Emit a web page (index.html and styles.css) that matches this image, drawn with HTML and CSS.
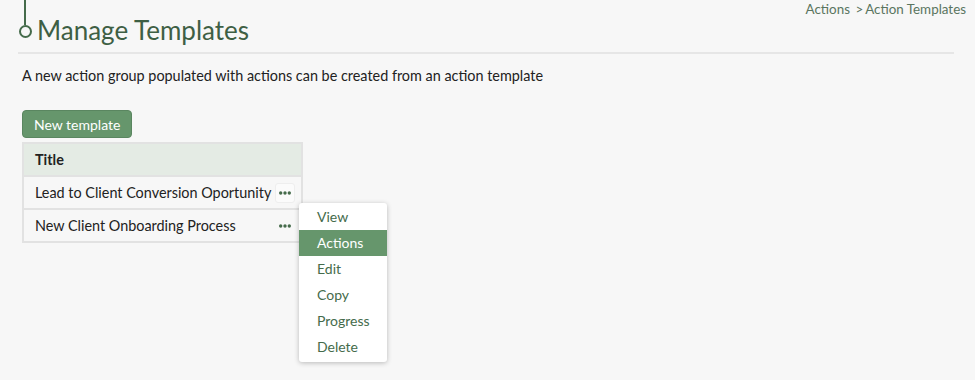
FILE: index.html
```html
<!DOCTYPE html>
<html lang="en">
<head>
    <meta charset="UTF-8">
    <title>Manage Templates</title>
    <link rel="stylesheet" href="styles.css">
</head>
<body>
    <div class="page">
        <div class="page-header">
            <div class="heading">
                <div class="marker">
                    <div class="marker-line"></div>
                    <div class="marker-dot"></div>
                </div>
                <h1 class="page-title">Manage Templates</h1>
            </div>
            <div class="breadcrumb">
                <a href="#">Actions</a>
                <span class="sep">&gt;</span><span>Action Templates</span>
            </div>
        </div>

        <div class="content">
            <p class="intro">A new action group populated with actions can be created from an action template</p>

            <button class="btn-primary">New template</button>

            <table class="template-table">
                <thead>
                    <tr>
                        <th>Title</th>
                    </tr>
                </thead>
                <tbody>
                    <tr>
                        <td>
                            <div class="cell">
                                <span>Lead to Client Conversion Oportunity</span>
                                <button class="more-btn hover">
                                    <svg width="12" height="4" viewBox="0 0 12 4"><circle cx="1.7" cy="2" r="1.7"/><circle cx="6" cy="2" r="1.7"/><circle cx="10.3" cy="2" r="1.7"/></svg>
                                </button>
                            </div>
                        </td>
                    </tr>
                    <tr>
                        <td>
                            <div class="cell">
                                <span>New Client Onboarding Process</span>
                                <button class="more-btn">
                                    <svg width="12" height="4" viewBox="0 0 12 4"><circle cx="1.7" cy="2" r="1.7"/><circle cx="6" cy="2" r="1.7"/><circle cx="10.3" cy="2" r="1.7"/></svg>
                                </button>
                                <ul class="row-menu">
                                    <li><a href="#">View</a></li>
                                    <li><a href="#" class="active">Actions</a></li>
                                    <li><a href="#">Edit</a></li>
                                    <li><a href="#">Copy</a></li>
                                    <li><a href="#">Progress</a></li>
                                    <li><a href="#">Delete</a></li>
                                </ul>
                            </div>
                        </td>
                    </tr>
                </tbody>
            </table>
        </div>
    </div>
</body>
</html>
```

FILE: styles.css
```css
:root {
    --green: #66966c;
    --green-dark: #456b4b;
    --title-color: #3e5f44;
    --bg-color: #f7f7f7;
    --border-color: #e2e2e2;
    --text-color: #222222;
}

* {
    margin: 0;
    padding: 0;
    box-sizing: border-box;
}

html, body {
    min-height: 100%;
    height: 100%;
}

body {
    font-family: Lato, "Noto Sans", sans-serif;
    background: var(--bg-color);
    color: var(--text-color);
    font-size: 14.4px;
    line-height: 1.4;
}

.page {
    min-height: 100vh;
    padding: 0 21px 0 18px;
}

.page-header {
    display: flex;
    justify-content: space-between;
    align-items: flex-start;
    border-bottom: 2px solid #e6e6e6;
    padding-bottom: 6px;
}

.heading {
    display: flex;
    align-items: flex-end;
}

.marker {
    display: flex;
    flex-direction: column;
    align-items: center;
    width: 14px;
    margin-bottom: 8px;
}

.marker-line {
    width: 2px;
    height: 25px;
    background: var(--green-dark);
}

.marker-dot {
    width: 13px;
    height: 13px;
    border: 2px solid var(--green-dark);
    border-radius: 50%;
}

.page-title {
    font-size: 26px;
    font-weight: 400;
    color: var(--title-color);
    margin-left: 5px;
    line-height: 1.2;
}

.breadcrumb {
    font-size: 13.4px;
    color: #5a7560;
    margin-right: -12px;
}

.breadcrumb a {
    color: #5a7560;
    text-decoration: none;
}

.breadcrumb .sep {
    margin: 0 2px 0 2px;
}

.content {
    padding: 12px 4px;
}

.intro {
    margin-bottom: 24px;
}

.btn-primary {
    display: block;
    font-family: inherit;
    font-size: 14px;
    color: #ffffff;
    background: var(--green);
    border: 1px solid #5a8660;
    border-radius: 4px;
    height: 28px;
    padding: 0 11px;
    cursor: pointer;
    margin-bottom: 4px;
}

.template-table {
    border-collapse: collapse;
    width: 281px;
}

.template-table th,
.template-table td {
    border: 2px solid var(--border-color);
    text-align: left;
    padding: 0 6px 0 11px;
    height: 33px;
    white-space: nowrap;
}

.template-table th {
    background: #e4ebe4;
    font-weight: 700;
}

.cell {
    display: flex;
    align-items: center;
    justify-content: space-between;
    position: relative;
}

.more-btn {
    display: flex;
    align-items: center;
    fill: var(--green-dark);
    background: none;
    border: 1px solid transparent;
    border-radius: 3px;
    padding: 7px 3px;
    cursor: pointer;
}

.more-btn.hover {
    background: #fbfbfb;
    border-color: #eeeeee;
}

.row-menu {
    position: absolute;
    top: -13px;
    left: 264px;
    width: 88px;
    list-style: none;
    background: #ffffff;
    border-radius: 3px;
    box-shadow: 0 1px 5px rgba(0, 0, 0, 0.25);
    padding: 1px 0 2px;
    z-index: 10;
}

.row-menu a {
    display: block;
    padding: 0 18px;
    height: 26px;
    line-height: 26px;
    font-size: 14px;
    color: var(--green-dark);
    text-decoration: none;
}

.row-menu a.active {
    background: var(--green);
    color: #ffffff;
}
```
